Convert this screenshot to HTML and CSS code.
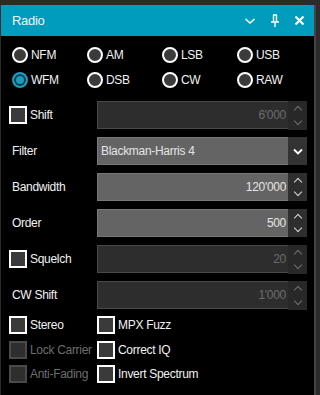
FILE: index.html
```html
<!DOCTYPE html>
<html lang="en">
<head>
    <meta charset="UTF-8">
    <title>Radio</title>
    <link rel="stylesheet" href="styles.css">
</head>
<body>
    <div class="window">
        <div class="titlebar">
            <span class="title">Radio</span>
            <div class="title-icons">
                <svg width="12" height="8" viewBox="0 0 12 8"><path d="M1.5 2 L6 6 L10.5 2" fill="none" stroke="#fff" stroke-width="1.6"/></svg>
                <svg width="10" height="14" viewBox="0 0 10 14"><path d="M3 1 H7 M3.5 1 V8 M6.5 1 V8 M1 8 H9 M5 8 V13" fill="none" stroke="#fff" stroke-width="1.4"/></svg>
                <svg width="11" height="11" viewBox="0 0 11 11"><path d="M1.5 1.5 L9.5 9.5 M9.5 1.5 L1.5 9.5" fill="none" stroke="#fff" stroke-width="2.2"/></svg>
            </div>
        </div>

        <div class="content">
            <div class="modes">
                <label class="radio"><span class="dot"></span>NFM</label>
                <label class="radio"><span class="dot"></span>AM</label>
                <label class="radio"><span class="dot"></span>LSB</label>
                <label class="radio"><span class="dot"></span>USB</label>
                <label class="radio"><span class="dot selected"></span>WFM</label>
                <label class="radio"><span class="dot"></span>DSB</label>
                <label class="radio"><span class="dot"></span>CW</label>
                <label class="radio"><span class="dot"></span>RAW</label>
            </div>

            <div class="row">
                <div class="label check-label"><span class="box"></span>Shift</div>
                <div class="field disabled">
                    <span class="value">6'000</span>
                    <div class="spin"><span class="up"></span><span class="down"></span></div>
                </div>
            </div>

            <div class="row">
                <div class="label">Filter</div>
                <div class="field combo">
                    <span class="value left">Blackman-Harris 4</span>
                    <div class="drop">
                        <svg width="10" height="7" viewBox="0 0 10 7"><path d="M1 1.5 L5 5.5 L9 1.5" fill="none" stroke="#fff" stroke-width="1.8"/></svg>
                    </div>
                </div>
            </div>

            <div class="row">
                <div class="label">Bandwidth</div>
                <div class="field">
                    <span class="value">120'000</span>
                    <div class="spin"><span class="up"></span><span class="down"></span></div>
                </div>
            </div>

            <div class="row">
                <div class="label">Order</div>
                <div class="field">
                    <span class="value">500</span>
                    <div class="spin"><span class="up"></span><span class="down"></span></div>
                </div>
            </div>

            <div class="row">
                <div class="label check-label"><span class="box"></span>Squelch</div>
                <div class="field disabled">
                    <span class="value">20</span>
                    <div class="spin"><span class="up"></span><span class="down"></span></div>
                </div>
            </div>

            <div class="row">
                <div class="label">CW Shift</div>
                <div class="field disabled">
                    <span class="value">1'000</span>
                    <div class="spin"><span class="up"></span><span class="down"></span></div>
                </div>
            </div>

            <div class="options">
                <div class="option"><span class="box"></span>Stereo</div>
                <div class="option"><span class="box"></span>MPX Fuzz</div>
                <div class="option off"><span class="box"></span>Lock Carrier</div>
                <div class="option"><span class="box"></span>Correct IQ</div>
                <div class="option off"><span class="box"></span>Anti-Fading</div>
                <div class="option"><span class="box"></span>Invert Spectrum</div>
            </div>
        </div>
    </div>
</body>
</html>
```

FILE: styles.css
```css
body {
    margin: 0;
    background: #2b2b2b;
    font-family: 'Liberation Sans', Arial, sans-serif;
    font-size: 12px;
    letter-spacing: -0.3px;
    color: #f2f2f2;
}

.window {
    margin: 5px 0 0 1px;
    width: 313px;
    height: 390px;
    background: #000;
    border-right: 2px solid #444;
}

.titlebar {
    height: 31px;
    background: #009cbd;
    display: flex;
    align-items: center;
    justify-content: space-between;
    padding: 0 9px 0 11px;
}

.title {
    font-size: 13px;
    color: #f4f4f4;
}

.title-icons {
    display: flex;
    align-items: center;
    gap: 14px;
}

.content {
    padding: 6px 0 0 7px;
}

.modes {
    display: grid;
    grid-template-columns: repeat(4, 75px);
    grid-auto-rows: 25px;
    padding-left: 4px;
    margin-bottom: 9px;
}

.radio {
    display: flex;
    align-items: center;
    gap: 3px;
}

.dot {
    width: 12px;
    height: 12px;
    border: 2px solid #fff;
    border-radius: 50%;
    background: #3b3b3b;
}

.dot.selected {
    border-color: #1a9cbd;
    background: #1a9cbd;
    box-shadow: inset 0 0 0 2px #0d3a47;
}

.row {
    display: flex;
    align-items: center;
    height: 28px;
    margin-bottom: 8px;
}

.label {
    width: 89px;
    padding-left: 4px;
    box-sizing: border-box;
}

.check-label {
    padding-left: 1px;
    display: flex;
    align-items: center;
    gap: 3px;
}

.box {
    width: 14px;
    height: 14px;
    border: 2px solid #fff;
    background: #3a3a3a;
    flex-shrink: 0;
}

.field {
    width: 210px;
    height: 28px;
    box-sizing: border-box;
    display: flex;
    align-items: center;
    background: #646464;
    border: 1px solid #777;
    border-right: none;
    position: relative;
}

.field.disabled {
    background: #2d2d2d;
    border-color: #4a4a4a;
}

.value {
    flex: 1;
    text-align: right;
    padding-right: 2px;
    color: #e4e4e4;
}

.value.left {
    text-align: left;
    padding-left: 3px;
}

.disabled .value {
    color: #6c6c6c;
}

.spin {
    width: 19px;
    height: 28px;
    margin-top: -1px;
    margin-bottom: -1px;
    background: #2e2e2e;
    display: flex;
    flex-direction: column;
    align-items: center;
    justify-content: space-around;
}

.disabled .spin {
    background: #282828;
    height: 29px;
    margin-bottom: -2px;
}

.spin span {
    width: 5px;
    height: 5px;
    border-left: 1.5px solid #d8d8d8;
    border-top: 1.5px solid #d8d8d8;
}

.disabled .spin span {
    border-color: #707070;
}

.spin .up {
    transform: rotate(45deg);
    margin-top: 4px;
}

.spin .down {
    transform: rotate(225deg);
    margin-bottom: 4px;
}

.drop {
    width: 19px;
    height: 28px;
    margin: -1px 0;
    background: #333;
    display: flex;
    align-items: center;
    justify-content: center;
}

.options {
    display: grid;
    grid-template-columns: 88px 150px;
    grid-auto-rows: 24.5px;
    margin-top: -4px;
    padding-left: 1px;
}

.option {
    display: flex;
    align-items: center;
    gap: 3px;
}

.option.off {
    color: #6e6e6e;
}

.option.off .box {
    border-color: #4a4a4a;
    background: #2e2e2e;
}
```
